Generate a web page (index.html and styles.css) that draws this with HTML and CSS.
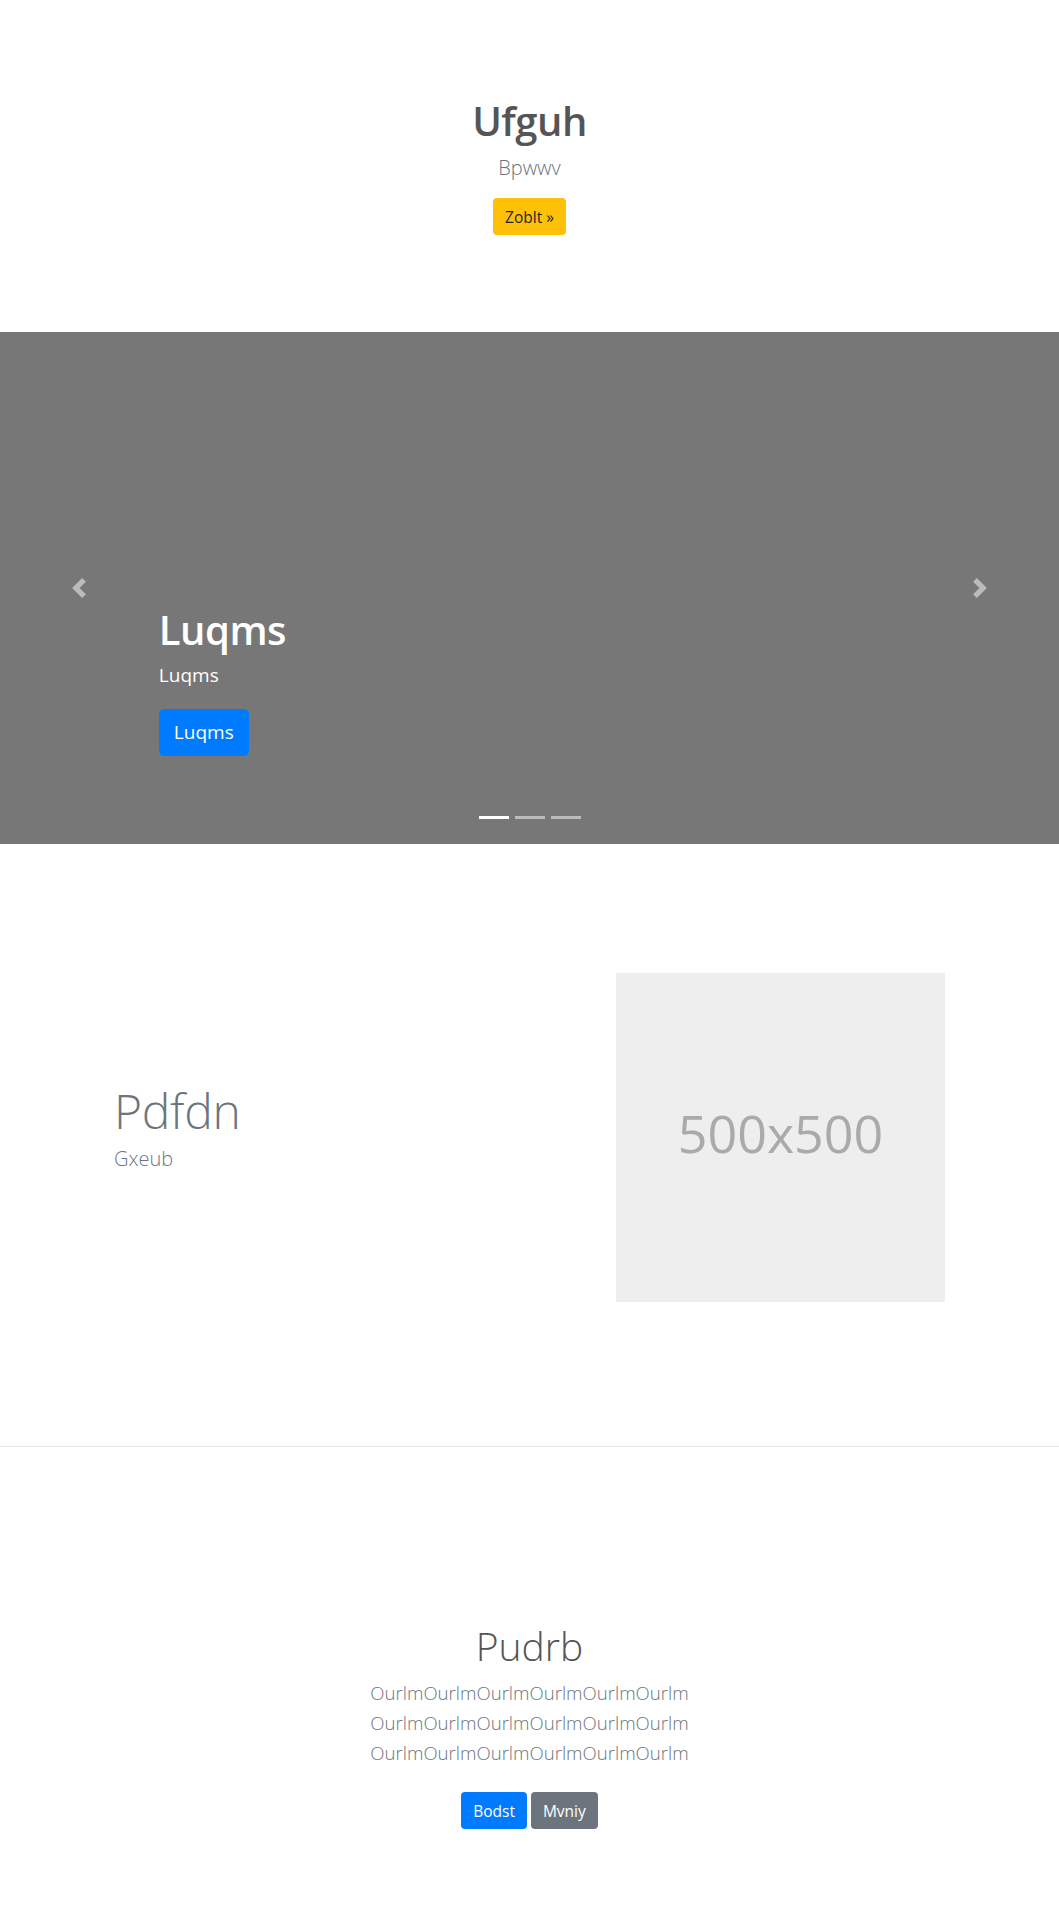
FILE: index.html
```html
<!DOCTYPE html>
<html lang="en">
<head>
<meta charset="utf-8">
<title>Ufguh</title>
<link rel="stylesheet" href="styles.css">
</head>
<body>
<section class="hero">
  <h1 class="hero-title">Ufguh</h1>
  <p class="lead hero-lead">Bpwwv</p>
  <a class="btn btn-warning" href="#">Zoblt »</a>
</section>

<section class="carousel">
  <a class="carousel-control prev" href="#">
    <svg class="ctrl-icon" viewBox="0 0 8 8" width="20" height="20"><path d="M5.25 0l-4 4 4 4 1.5-1.5L4.25 4l2.5-2.5L5.25 0z"/></svg>
  </a>
  <div class="carousel-caption">
    <h1 class="caption-title">Luqms</h1>
    <p class="caption-text">Luqms</p>
    <a class="btn btn-primary btn-lg" href="#">Luqms</a>
  </div>
  <a class="carousel-control next" href="#">
    <svg class="ctrl-icon" viewBox="0 0 8 8" width="20" height="20"><path d="M2.75 0l-1.5 1.5L3.75 4l-2.5 2.5L2.75 8l4-4-4-4z"/></svg>
  </a>
  <ol class="indicators">
    <li class="active"></li>
    <li></li>
    <li></li>
  </ol>
</section>

<section class="feature">
  <div class="feature-text">
    <h2 class="feature-title">Pdfdn</h2>
    <p class="lead feature-lead">Gxeub</p>
  </div>
  <div class="feature-media">
    <div class="placeholder">500x500</div>
  </div>
</section>

<section class="cta">
  <h2 class="cta-title">Pudrb</h2>
  <p class="lead cta-lead">OurlmOurlmOurlmOurlmOurlmOurlm<br>OurlmOurlmOurlmOurlmOurlmOurlm<br>OurlmOurlmOurlmOurlmOurlmOurlm</p>
  <div class="cta-buttons">
    <a class="btn btn-primary" href="#">Bodst</a>
    <a class="btn btn-secondary" href="#">Mvniy</a>
  </div>
</section>
</body>
</html>
```

FILE: styles.css
```css
* { box-sizing: border-box; }
html, body { margin: 0; padding: 0; }
body {
  font-family: "Open Sans", "Noto Sans", "Liberation Sans", sans-serif;
  font-size: 16px;
  line-height: 1.5;
  color: #212529;
  background: #fff;
}
h1, h2, p { margin: 0; }
a { text-decoration: none; }

.lead { font-size: 20px; font-weight: 300; line-height: 1.5; color: #6c757d; }

.btn {
  display: inline-block;
  font-size: 15.5px;
  line-height: 24px;
  padding: 7px 12px 6px;
  border-radius: 4px;
  border: 0;
  vertical-align: middle;
}
.btn-warning { background: #ffc107; color: #212529; }
.btn-primary { background: #007bff; color: #fff; }
.btn-secondary { background: #6c757d; color: #fff; }
.btn-lg { font-size: 19px; line-height: 31px; padding: 8px 15px; border-radius: 5px; }

/* hero */
.hero {
  text-align: center;
  padding: 97px 0 97px;
}
.hero-title {
  font-size: 40px;
  line-height: 1.2;
  font-weight: 600;
  color: #555;
  letter-spacing: -0.5px;
  margin-bottom: 8px;
}
.hero-lead { margin-bottom: 15px; }

/* carousel */
.carousel {
  position: relative;
  height: 512px;
  background: #777;
  overflow: hidden;
}
.carousel-control {
  position: absolute;
  top: 0;
  bottom: 0;
  width: 15%;
  display: flex;
  align-items: center;
  justify-content: center;
  opacity: 0.5;
}
.carousel-control.prev { left: 0; }
.carousel-control.next { right: 0; }
.ctrl-icon { fill: #fff; display: block; }

.carousel-caption {
  position: absolute;
  left: 15%;
  right: 15%;
  bottom: 88px;
  color: #fff;
}
.caption-title {
  font-size: 40px;
  line-height: 1.2;
  font-weight: 600;
  letter-spacing: -0.5px;
  margin-bottom: 6px;
}
.caption-text {
  font-size: 19px;
  line-height: 30px;
  font-weight: 500;
  margin-bottom: 19px;
}

.indicators {
  position: absolute;
  left: 0;
  right: 0;
  bottom: 25px;
  margin: 0;
  padding: 0;
  list-style: none;
  display: flex;
  justify-content: center;
  gap: 6px;
}
.indicators li {
  width: 30px;
  height: 3px;
  background: #fff;
  opacity: 0.5;
}
.indicators li.active { opacity: 1; }

/* feature */
.feature {
  display: flex;
  align-items: center;
  padding: 129px 114px 144px 114px;
  border-bottom: 1px solid #e5e5e5;
}
.feature-text { flex: 1; }
.feature-media { flex: 1; display: flex; justify-content: flex-end; }
.feature-title {
  font-size: 48px;
  line-height: 1.2;
  font-weight: 300;
  color: #6c757d;
  letter-spacing: -0.3px;
  margin-bottom: 5px;
}
.feature-lead { margin-bottom: 19px; }
.placeholder {
  width: 329px;
  height: 329px;
  background: #eee;
  color: #aaa;
  font-size: 52px;
  padding-bottom: 10px;
  display: flex;
  align-items: center;
  justify-content: center;
}

/* cta */
.cta {
  text-align: center;
  padding: 176px 0 91px;
}
.cta-title {
  font-size: 39px;
  line-height: 1.2;
  font-weight: 300;
  color: #555;
  margin-bottom: 8px;
}
.cta-lead { font-size: 18.6px; line-height: 30px; margin-bottom: 24px; }
.cta-buttons { display: flex; justify-content: center; gap: 4px; }
```
